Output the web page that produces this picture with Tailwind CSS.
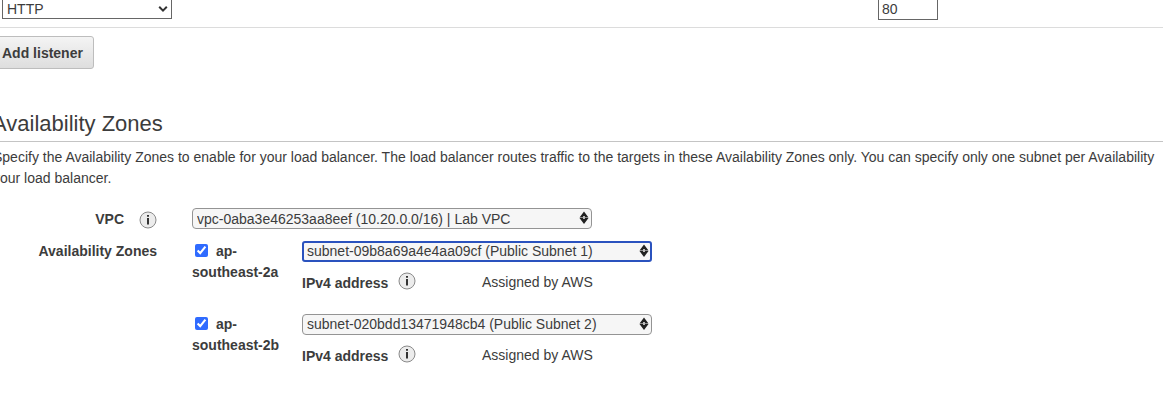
<!DOCTYPE html>
<html lang="en">
<head>
<meta charset="utf-8">
<title>Configure Load Balancer</title>
<script src="https://cdn.jsdelivr.net/npm/@tailwindcss/browser@4"></script>
</head>
<body class="overflow-hidden bg-white font-['Liberation_Sans',Arial,sans-serif] text-sm leading-[21px] text-[#3c3c3c]">
<svg class="hidden">
  <symbol id="info" viewBox="0 0 18 18">
    <circle cx="9" cy="9" r="8" fill="#ececec" stroke="#8a8a8a"/>
    <path d="M8 4h2v1.8H8zM8 7h2v6.6H8z" fill="#333"/>
  </symbol>
  <symbol id="updown" viewBox="0 0 10 14">
    <path d="M5 .5 9.5 6.5h-9zM5 13 .5 7h9z" fill="#222"/>
    <path d="M4 5h2v3H4z" fill="#bbb"/>
  </symbol>
</svg>

<section class="flex h-[28px] items-start justify-between border-b border-[#dcdcdc] pl-0.5 pr-[225px]">
  <div class="relative -mt-[3px]">
    <select aria-label="Load Balancer Protocol" class="block h-[22px] w-[170px] appearance-none border border-[#666] bg-white pl-1 pt-px leading-5">
      <option>HTTP</option>
    </select>
    <svg class="pointer-events-none absolute right-1 top-2 h-2 w-2.5" viewBox="0 0 10 8"><path d="M1.2 1.8 5 5.6l3.8-3.8" fill="none" stroke="#333" stroke-width="2"/></svg>
  </div>
  <input aria-label="Load Balancer Port" value="80" class="-mt-[3px] block h-[23px] w-[60px] border border-[#666] bg-white px-[3px]">
</section>

<button class="mt-2 -ml-[9px] block h-[33px] rounded-[3px] border border-[#bdbdbd] bg-linear-to-b from-[#f4f4f4] to-[#dedede] px-2.5 pt-px font-bold">Add listener</button>

<section class="mt-[41px]">
  <h2 class="-ml-2 border-b border-[#c4c4c4] pb-[3px] text-[22px] leading-7">Availability Zones</h2>
  <p class="-ml-[7px] mt-[5px] whitespace-nowrap">Specify the Availability Zones to enable for your load balancer. The load balancer routes traffic to the targets in these Availability Zones only. You can specify only one subnet per Availability<br>your load balancer.</p>
</section>

<section class="mt-[19px] grid grid-cols-[157px_1fr] gap-x-[35px]">
  <div class="flex items-start justify-end gap-[15px]">
    <label for="vpc" class="mt-px font-bold">VPC</label>
    <button aria-label="About VPC" class="mt-[3px]"><svg class="block size-[18px]"><use href="#info"/></svg></button>
  </div>
  <div class="relative w-[400px]">
    <select id="vpc" class="block h-[21px] w-full appearance-none rounded-[4px] border border-[#949494] bg-[#f6f6f6] pl-1 pt-px leading-[19px]">
      <option>vpc-0aba3e46253aa8eef (10.20.0.0/16) | Lab VPC</option>
    </select>
    <svg class="pointer-events-none absolute right-[3px] top-[3px] h-3.5 w-2.5"><use href="#updown"/></svg>
  </div>

  <h3 class="mt-[11px] text-right font-bold">Availability Zones</h3>
  <div class="mt-[11px] grid grid-cols-[110px_1fr] gap-y-5">
    <label class="w-[90px] font-bold"><input type="checkbox" checked class="ml-[3px] mr-2 size-[13px] align-[-1px] accent-[#2f6bff]">ap-<br>southeast-2a</label>
    <div>
      <div class="relative w-[350px]">
        <select aria-label="Subnet for ap-southeast-2a" class="block h-[21px] w-full appearance-none rounded-[3px] border-2 border-[#2a52be] bg-[#f6f6f6] pl-[3px] leading-[17px]">
          <option>subnet-09b8a69a4e4aa09cf (Public Subnet 1)</option>
        </select>
        <svg class="pointer-events-none absolute right-[3px] top-[3px] h-3.5 w-2.5"><use href="#updown"/></svg>
      </div>
      <div class="mt-[10px] flex items-start">
        <span class="mt-px w-24 font-bold">IPv4 address</span>
        <button aria-label="About IPv4 address" class="mr-[66px]"><svg class="block size-[18px]"><use href="#info"/></svg></button>
        <span>Assigned by AWS</span>
      </div>
    </div>
    <label class="w-[90px] font-bold"><input type="checkbox" checked class="ml-[3px] mr-2 size-[13px] align-[-1px] accent-[#2f6bff]">ap-<br>southeast-2b</label>
    <div>
      <div class="relative w-[350px]">
        <select aria-label="Subnet for ap-southeast-2b" class="block h-[21px] w-full appearance-none rounded-[4px] border border-[#949494] bg-[#f6f6f6] pl-1 leading-[19px]">
          <option>subnet-020bdd13471948cb4 (Public Subnet 2)</option>
        </select>
        <svg class="pointer-events-none absolute right-[3px] top-[3px] h-3.5 w-2.5"><use href="#updown"/></svg>
      </div>
      <div class="mt-[10px] flex items-start">
        <span class="mt-px w-24 font-bold">IPv4 address</span>
        <button aria-label="About IPv4 address" class="mr-[66px]"><svg class="block size-[18px]"><use href="#info"/></svg></button>
        <span>Assigned by AWS</span>
      </div>
    </div>
  </div>
</section>
</body>
</html>
